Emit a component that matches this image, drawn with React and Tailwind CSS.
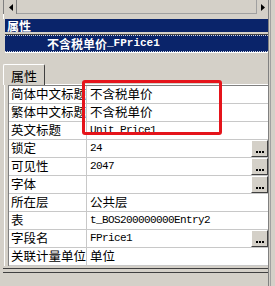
import React from "react";

const rows = [
  { label: "简体中文标题", value: "不含税单价", cjk: true },
  { label: "繁体中文标题", value: "不含税单价", cjk: true },
  { label: "英文标题", value: "Unit Price1" },
  { label: "锁定", value: "24", btn: true },
  { label: "可见性", value: "2047", btn: true },
  { label: "字体", value: "", btn: true },
  { label: "所在层", value: "公共层", cjk: true },
  { label: "表", value: "t_BOS200000000Entry2" },
  { label: "字段名", value: "FPrice1", btn: true },
  { label: "关联计量单位", value: "单位", cjk: true },
];

const cjk = { fontFamily: '"Noto Sans CJK SC", "Noto Sans", sans-serif' };
const mono = { fontFamily: '"Liberation Mono", "Noto Sans CJK SC", monospace' };
const wm = { fontFamily: '"Liberation Sans", "Noto Sans CJK SC", sans-serif' };

function Ellipsis() {
  return (
    <div className="w-[17px] h-[17px] bg-[#d4d0c8] border-t border-l border-t-white border-l-white border-r border-b border-r-[#404040] border-b-[#404040] flex items-end justify-center pb-[3px] shrink-0">
      <div className="flex gap-[1px]">
        <div className="w-[2px] h-[2px] bg-black" />
        <div className="w-[2px] h-[2px] bg-black" />
        <div className="w-[2px] h-[2px] bg-black" />
      </div>
    </div>
  );
}

export default function App() {
  return (
    <div className="w-[275px] h-[286px] bg-[#d4d0c8] relative overflow-hidden flex" style={cjk}>
      <div className="w-[268px] flex flex-col pl-[3px]">
        {/* top scroll row */}
        <div className="h-[14px] flex items-stretch border-l border-[#808080]">
          <div className="w-[12px] ml-[1px] bg-[#d4d0c8] border-r border-[#808080] flex items-center justify-center">
            <svg width="4" height="7" viewBox="0 0 4 7"><path d="M4 0 L0 3.5 L4 7 Z" fill="#000" /></svg>
          </div>
          <div className="flex-1 border-b border-[#a0a0a0]" />
          <div className="w-[12px] bg-[#d4d0c8] border-l border-[#a0a0a0] flex items-center justify-center">
            <svg width="4" height="7" viewBox="0 0 4 7"><path d="M0 0 L4 3.5 L0 7 Z" fill="#000" /></svg>
          </div>
        </div>
        <div className="h-[5px] border-l border-white" />
        {/* title bar */}
        <div className="h-[13px] bg-[#0a246a] ml-[2px] flex items-center pl-[2px] text-white text-[12px] font-bold leading-none">
          属性
        </div>
        <div className="h-[2px]" />
        <div className="ml-[2px] border-t border-[#404040] border-b border-b-white">
          <div className="h-[17px] bg-[#0a246a] border-y border-dotted border-white/80 flex items-center pl-[42px] text-white text-[12px] font-bold leading-none">
            <span>不含税单价</span>
            <span style={mono} className="text-[11px]">_FPrice1</span>
          </div>
        </div>
        <div className="h-[10px]" />
        {/* tab */}
        <div className="h-[22px] flex items-end">
          <div className="w-[42px] h-[21px] border-t border-l border-white border-r border-r-[#404040] rounded-t-[2px] flex items-center justify-center text-[13px] leading-none text-black">
            属性
          </div>
          <div className="flex-1 border-b border-white" />
        </div>
        {/* grid */}
        <div className="ml-[1px] border-l border-white pl-[3px] flex flex-col">
          <div className="bg-white border-t border-l border-[#808080] flex flex-col">
            {rows.map((r, i) => (
              <div key={i} className="h-[18px] flex border-b border-[#c8c8c8] leading-none text-black">
                <div className="w-[78px] shrink-0 border-r border-[#c8c8c8] overflow-hidden whitespace-nowrap flex items-center pl-[2px] text-[12.5px]">
                  {r.label}
                </div>
                <div className="flex-1 flex items-center pl-[3px] overflow-hidden whitespace-nowrap">
                  <span style={r.cjk ? cjk : mono} className={r.cjk ? "text-[12.5px]" : "text-[11px] tracking-[-0.6px]"}>
                    {r.value}
                  </span>
                </div>
                {r.btn && <Ellipsis />}
              </div>
            ))}
          </div>
        </div>
        <div className="h-[2px]" />
        <div className="h-[1px] bg-[#404040]" />
        <div className="h-[3px]" />
        <div className="h-[1px] bg-[#404040]" />
        <div className="flex-1" />
      </div>
      <div className="w-[7px] border-l border-[#808080] flex">
        <div className="w-[1px] ml-[1px] bg-[#a0a0a0]" />
      </div>

      {/* red highlight */}
      <div className="absolute left-[82px] top-[80px] w-[140px] h-[55px] border-[3px] border-[#e5141b] rounded-[3px]" />

      {/* watermarks */}
      <div className="absolute left-[118px] top-[52px] text-[20px] font-bold text-black/[0.025] whitespace-nowrap pointer-events-none" style={wm}>www.tdxsoft.com</div>
      <div className="absolute left-[38px] top-[128px] text-[22px] font-bold text-black/[0.025] whitespace-nowrap pointer-events-none" style={wm}>电话：4006-6500-27</div>
      <div className="absolute left-[38px] top-[182px] text-[22px] font-bold text-black/[0.025] whitespace-nowrap pointer-events-none" style={wm}>网址：www.tdxsoft.com</div>
    </div>
  );
}
